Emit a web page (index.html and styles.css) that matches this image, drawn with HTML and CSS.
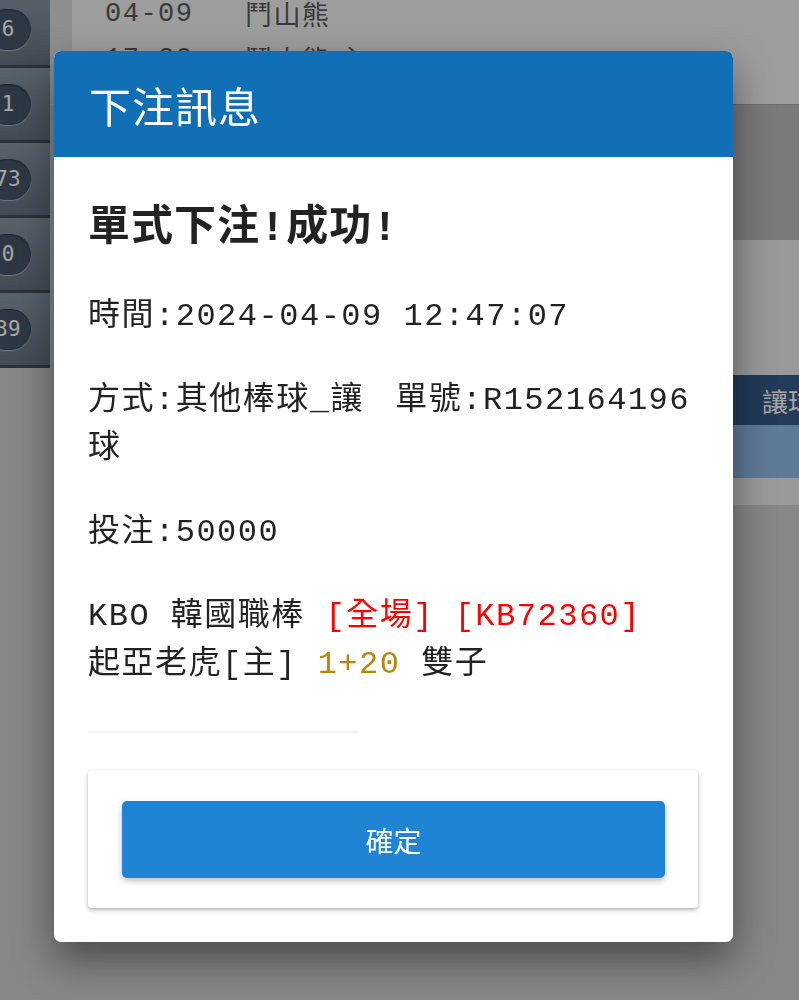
FILE: index.html
```html
<!DOCTYPE html>
<html lang="zh-Hant">
<head>
    <meta charset="UTF-8">
    <meta name="viewport" content="width=device-width, initial-scale=1.0">
    <title>下注訊息</title>
    <link rel="stylesheet" href="styles.css">
</head>
<body>
    <div class="page">
        <nav class="side-nav">
            <div class="nav-item"><span class="badge">6</span></div>
            <div class="nav-item"><span class="badge">1</span></div>
            <div class="nav-item"><span class="badge">73</span></div>
            <div class="nav-item"><span class="badge">0</span></div>
            <div class="nav-item"><span class="badge">39</span></div>
        </nav>
        <div class="gutter"></div>
        <main class="content">
            <div class="match-list">
                <div class="match-row">
                    <span class="match-time">04-09</span>
                    <span class="match-team">鬥山熊</span>
                </div>
                <div class="match-row">
                    <span class="match-time">17:20</span>
                    <span class="match-team">鬥山熊 主</span>
                </div>
            </div>
            <div class="band band-dark"></div>
            <div class="band band-light"></div>
            <div class="odds-head"><span class="odds-col">讓球</span></div>
            <div class="odds-row"></div>
            <div class="band band-foot"></div>
        </main>
    </div>

    <div class="backdrop"></div>

    <div class="dialog">
        <div class="dialog-title">下注訊息</div>
        <div class="dialog-body">
            <h2 class="result-title">單式下注!成功!</h2>
            <p>時間:2024-04-09 12:47:07</p>
            <p class="bet-type">
                <span>方式:其他棒球_讓球</span>
                <span class="order-no">單號:R152164196</span>
            </p>
            <p>投注:50000</p>
            <p>KBO 韓國職棒 <span class="red">[全場]</span> <span class="red">[KB72360]</span><br>起亞老虎[主] <span class="gold">1+20</span> 雙子</p>
            <div class="divider"></div>
            <div class="actions">
                <button class="confirm-btn">確定</button>
            </div>
        </div>
    </div>
</body>
</html>
```

FILE: styles.css
```css
body {
    margin: 0;
    height: 1000px;
    overflow: hidden;
    background-color: #d0d0d0;
    font-family: "Noto Sans CJK TC", sans-serif;
}

.page {
    display: flex;
    align-items: flex-start;
}

/* left menu */
.side-nav {
    width: 50px;
    flex-shrink: 0;
    margin-top: -7px;
}

.nav-item {
    height: 72px;
    border-bottom: 3px solid #424e5b;
    background: linear-gradient(#8a98a6, #677583);
    display: flex;
    align-items: center;
    justify-content: flex-end;
    padding-right: 19px;
    overflow: hidden;
}

.badge {
    flex-shrink: 0;
    width: 46px;
    height: 41px;
    line-height: 41px;
    border-radius: 21px;
    background-color: #475669;
    color: #ffffff;
    text-align: center;
    font-family: "DejaVu Sans Mono", monospace;
    font-size: 21px;
    box-shadow: 0 1px 1px rgba(255, 255, 255, 0.45), inset 0 1px 2px rgba(0, 0, 0, 0.35);
}

.gutter {
    width: 22px;
    height: 105px;
    flex-shrink: 0;
    background-color: #dbdbdb;
}

.content {
    flex: 1;
}

.match-list {
    height: 113px;
    margin-top: -9px;
    padding-left: 33px;
    background-color: #f1f1f1;
    border-bottom: 1px solid #a8a8a8;
    overflow: hidden;
}

.match-row {
    display: flex;
    height: 45px;
    align-items: center;
    color: #5a5a5a;
    font-size: 27px;
    letter-spacing: 1.5px;
}

.match-time {
    width: 140px;
    font-family: "Liberation Mono", monospace;
}

.band-dark {
    height: 135px;
    background-color: #bcbcbc;
}

.band-light {
    height: 135px;
    background-color: #ebebeb;
}

.odds-head {
    height: 50px;
    background-color: #375987;
    color: #ffffff;
    font-size: 26px;
    display: flex;
    align-items: center;
    overflow: hidden;
    padding-left: 690px;
    white-space: nowrap;
}

.odds-row {
    height: 53px;
    background-color: #92bceb;
}

.band-foot {
    height: 27px;
    background-color: #ededed;
}

.backdrop {
    position: fixed;
    inset: 0;
    background-color: rgba(0, 0, 0, 0.35);
}

/* dialog */
.dialog {
    position: absolute;
    left: 54px;
    top: 51px;
    width: 679px;
    background: #fff;
    border-radius: 7px;
    overflow: hidden;
    box-shadow: 0 18px 40px rgba(0, 0, 0, 0.45);
}

.dialog-title {
    height: 106px;
    display: flex;
    align-items: center;
    padding: 0 35px;
    background-color: #116fb6;
    color: #fff;
    font-size: 42px;
    letter-spacing: 1px;
}

.dialog-body {
    padding: 48px 35px 34px 34px;
    font-family: "Liberation Mono", "Noto Sans CJK TC", monospace;
    font-size: 32px;
    line-height: 48px;
    letter-spacing: 1.5px;
    color: #222;
}

.result-title {
    margin: 0 0 40px;
    font-size: 42px;
    line-height: 48px;
    letter-spacing: 1px;
    font-weight: bold;
}

.dialog-body p {
    margin: 0 0 36px;
}

.bet-type {
    display: flex;
    gap: 20px;
    padding-right: 8px;
}

.order-no {
    flex-shrink: 0;
}

.red {
    color: #ff0000;
}

.gold {
    color: #b8860b;
}

.divider {
    width: 270px;
    height: 2px;
    margin: 42px 0 37px;
    background-color: #f2f2f2;
}

.actions {
    padding: 31px 33px 30px 34px;
    border-radius: 4px;
    box-shadow: 0 2px 4px rgba(0, 0, 0, 0.3), 0 0 2px rgba(0, 0, 0, 0.06);
}

.confirm-btn {
    display: block;
    width: 100%;
    height: 77px;
    border: none;
    border-radius: 5px;
    background-color: #1f84d4;
    color: #fff;
    font-family: "Noto Sans CJK TC", sans-serif;
    font-size: 28px;
    cursor: pointer;
    box-shadow: 0 3px 6px rgba(0, 0, 0, 0.25);
}
```
